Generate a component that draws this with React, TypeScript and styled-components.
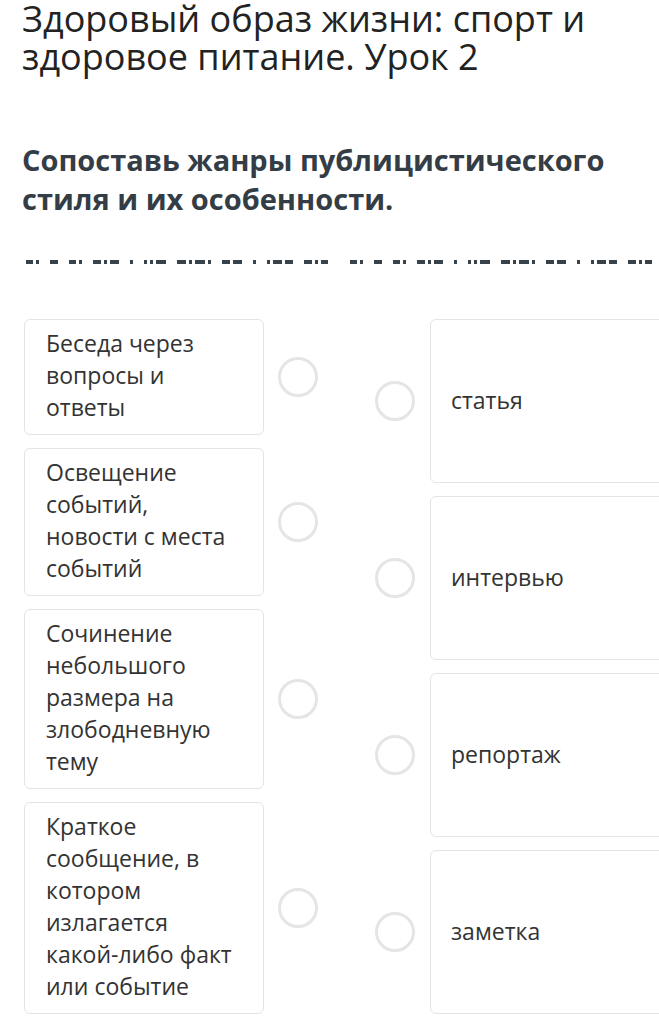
import { FC } from "react";
import styled, { createGlobalStyle } from "styled-components";

const GlobalStyle = createGlobalStyle`
  html, body {
    margin: 0;
    padding: 0;
    background: #fff;
    overflow: hidden;
  }
  body {
    font-family: "Open Sans", "Noto Sans", sans-serif;
    color: #333;
  }
`;

const leftItems = [
  ["Беседа через", "вопросы и", "ответы"],
  ["Освещение", "событий,", "новости с места", "событий"],
  ["Сочинение", "небольшого", "размера на", "злободневную", "тему"],
  ["Краткое", "сообщение, в", "котором", "излагается", "какой-либо факт", "или событие"],
];

const rightItems = ["статья", "интервью", "репортаж", "заметка"];

// the hidden instruction line is drawn as a row of dashes
const dashWords = [
  [7, 3], [8], [7, 3], [8, 3, 9], [3], [3, 3, 10], [9, 3, 10, 3], [8, 9], [3],
  [3, 9, 8], [8, 3, 7],
];

const DashGroup: FC = () => (
  <DashGroupWrapper>
    {dashWords.map((word, i) => (
      <DashWord key={i}>
        {word.map((w, j) => (
          <Dash key={j} $w={w} />
        ))}
      </DashWord>
    ))}
  </DashGroupWrapper>
);

const App: FC = () => {
  return (
    <Page>
      <GlobalStyle />
      <Title>Здоровый образ жизни: спорт и здоровое питание. Урок 2</Title>
      <Question>Сопоставь жанры публицистического стиля и их особенности.</Question>
      <DashRow>
        <DashGroup />
        <DashGroup />
      </DashRow>
      <Board>
        <Column>
          {leftItems.map((lines, i) => (
            <LeftRow key={i}>
              <LeftCard>
                {lines.map((l, j) => (
                  <Line key={j}>{l}</Line>
                ))}
              </LeftCard>
              <Radio />
            </LeftRow>
          ))}
        </Column>
        <Column>
          {rightItems.map((text) => (
            <RightRow key={text}>
              <Radio />
              <RightCard>{text}</RightCard>
            </RightRow>
          ))}
        </Column>
      </Board>
    </Page>
  );
};

export default App;

// styled-components
const Page = styled.div`
  width: 659px;
  height: 1026px;
  overflow: hidden;
  padding-left: 22px;
  box-sizing: border-box;
`;

const Title = styled.h1`
  margin: 0;
  width: 600px;
  font-size: 36px;
  line-height: 38px;
  font-weight: 400;
  color: #222;
`;

const Question = styled.h2`
  margin: 64px 0 0;
  width: 620px;
  font-size: 29px;
  line-height: 39px;
  font-weight: 700;
  color: #343d45;
`;

const DashRow = styled.div`
  display: flex;
  gap: 22px;
  margin-top: 42px;
  margin-left: 4px;
  height: 4px;
  white-space: nowrap;
`;

const DashGroupWrapper = styled.div`
  display: flex;
  gap: 11px;
  flex-shrink: 0;
`;

const DashWord = styled.div`
  display: flex;
  gap: 3px;
`;

const Dash = styled.span<{ $w: number }>`
  display: block;
  width: ${(p) => p.$w}px;
  height: 4px;
  background: #38424a;
`;

const Board = styled.div`
  display: flex;
  gap: 57px;
  margin-top: 55px;
  margin-left: 2px;
`;

const Column = styled.div`
  display: flex;
  flex-direction: column;
  gap: 13px;
`;

const LeftRow = styled.div`
  display: flex;
  align-items: center;
  gap: 14px;
`;

const RightRow = styled.div`
  display: flex;
  align-items: center;
  gap: 15px;
`;

const Card = styled.div`
  box-sizing: border-box;
  border: 1px solid #e2e4e6;
  border-radius: 6px;
  background: #fff;
  font-size: 23px;
  line-height: 32px;
  color: #333;
`;

const LeftCard = styled(Card)`
  width: 240px;
  padding: 7px 12px 11px 21px;
`;

const RightCard = styled(Card)`
  width: 260px;
  height: 164px;
  flex-shrink: 0;
  display: flex;
  align-items: center;
  padding: 0 0 2px 20px;
`;

const Line = styled.div`
  white-space: nowrap;
`;

const Radio = styled.span`
  display: block;
  flex-shrink: 0;
  width: 40px;
  height: 40px;
  box-sizing: border-box;
  border: 3px solid #e3e5e7;
  border-radius: 50%;
`;
